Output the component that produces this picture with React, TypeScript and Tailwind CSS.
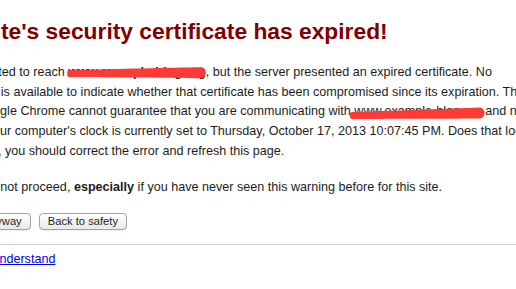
import React from "react";

function Scribbles() {
  return (
    <svg className="absolute inset-0 pointer-events-none" width="516" height="289" viewBox="0 0 516 289">
      <path
        d="M69 70 C120 69 170 67.5 201 67.2 C207.5 67.2 207.5 78.2 201 78.2 C170 78 120 77.5 69 77 C66.5 77 66.5 70 69 70 Z"
        fill="#fd3a35"
      />
      <path
        d="M352 112 C400 110.5 450 108.5 479 107.5 C486.5 107.5 486.5 118.6 479 118.6 C450 118.8 400 119 352 119 C349 119 349 112 352 112 Z"
        fill="#fd3a35"
      />
    </svg>
  );
}

function Button({ children }: { children: React.ReactNode }) {
  return (
    <button className="h-[17px] px-[8px] rounded-[4px] border border-[#a3a3a3] bg-gradient-to-b from-white to-[#e9e9e9] text-[11.2px] leading-none text-[#1d1d1d] shadow-[0_1px_0_rgba(0,0,0,0.06)]">
      {children}
    </button>
  );
}

export default function App() {
  return (
    <div className="relative w-[516px] h-[289px] overflow-hidden bg-white font-['Liberation_Sans',Arial,sans-serif]">
      <div className="-ml-[65px] pt-[18px] whitespace-nowrap">
        <h1 className="text-[22.8px] leading-[27px] font-bold text-[#800000]">
          The site's security certificate has expired!
        </h1>

        <p className="mt-[18px] text-[12.6px] leading-[19.7px] text-[#1c1c1c]">
          You attempted to reach <b>www.example-blog.org</b>, but the server presented an expired certificate. No
          <br />
          information is available to indicate whether that certificate has been compromised since its expiration. This
          <br />
          means Google Chrome cannot guarantee that you are communicating with www.example-blog.org and not an
          <br />
          attacker. Your computer's clock is currently set to Thursday, October 17, 2013 10:07:45 PM. Does that look
          <br />
          right? If not, you should correct the error and refresh this page.
        </p>

        <p className="mt-[16px] text-[12.6px] leading-[19.7px] text-[#1c1c1c]">
          You should not proceed, <b>especially</b> if you have never seen this warning before for this site.
        </p>

        <div className="mt-[15.5px] flex gap-[8px] -ml-[5px]">
          <Button>Proceed anyway</Button>
          <Button>Back to safety</Button>
        </div>

        <div className="mt-[14px] border-t border-[#cfcfcf]" />

        <a href="#" className="block mt-[5px] ml-[7px] text-[12.6px] leading-[19.7px] text-[#0000ee] underline">
          Help me understand
        </a>
      </div>
      <Scribbles />
    </div>
  );
}
